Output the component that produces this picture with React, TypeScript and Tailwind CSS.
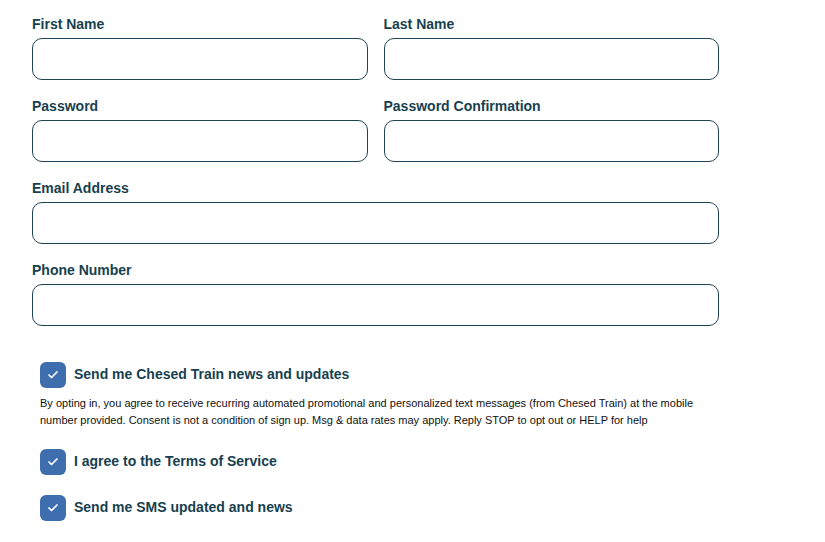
import { Check } from "lucide-react";

const font = { fontFamily: '"Liberation Sans", Arial, Helvetica, sans-serif' };

function Field({ label, className = "" }: { label: string; className?: string }) {
  return (
    <div className={className}>
      <label className="block text-[14px] font-bold leading-5 text-[#173f4f]">{label}</label>
      <input
        type="text"
        className="mt-1 block h-[42px] w-full rounded-[10px] border border-[#1d4354] bg-white px-3 outline-none"
      />
    </div>
  );
}

function CheckRow({ label }: { label: string }) {
  return (
    <label className="flex items-center gap-2">
      <span className="flex h-[26px] w-[26px] items-center justify-center rounded-[6px] bg-[#3f6eae]">
        <Check className="h-3 w-3 text-white" strokeWidth={3.5} />
      </span>
      <span className="-mt-[2px] text-[14px] font-bold text-[#173f4f]">{label}</span>
    </label>
  );
}

export default function App() {
  return (
    <div className="min-h-screen bg-white" style={font}>
      <div className="w-[719px] pl-8 pt-[14px]">
        <div className="grid grid-cols-2 gap-x-4 gap-y-4">
          <Field label="First Name" />
          <Field label="Last Name" />
          <Field label="Password" />
          <Field label="Password Confirmation" />
          <Field label="Email Address" className="col-span-2" />
          <Field label="Phone Number" className="col-span-2" />
        </div>

        <div className="mt-[36px] pl-2">
          <CheckRow label="Send me Chesed Train news and updates" />
          <p className="mt-[7px] text-[11px] leading-[17px] text-[#111]">
            By opting in, you agree to receive recurring automated promotional and personalized text messages (from Chesed Train) at the mobile number provided. Consent is not a condition of sign up. Msg &amp; data rates may apply. Reply STOP to opt out or HELP for help
          </p>
          <div className="mt-[20px]">
            <CheckRow label="I agree to the Terms of Service" />
          </div>
          <div className="mt-[20px]">
            <CheckRow label="Send me SMS updated and news" />
          </div>
        </div>
      </div>
    </div>
  );
}
